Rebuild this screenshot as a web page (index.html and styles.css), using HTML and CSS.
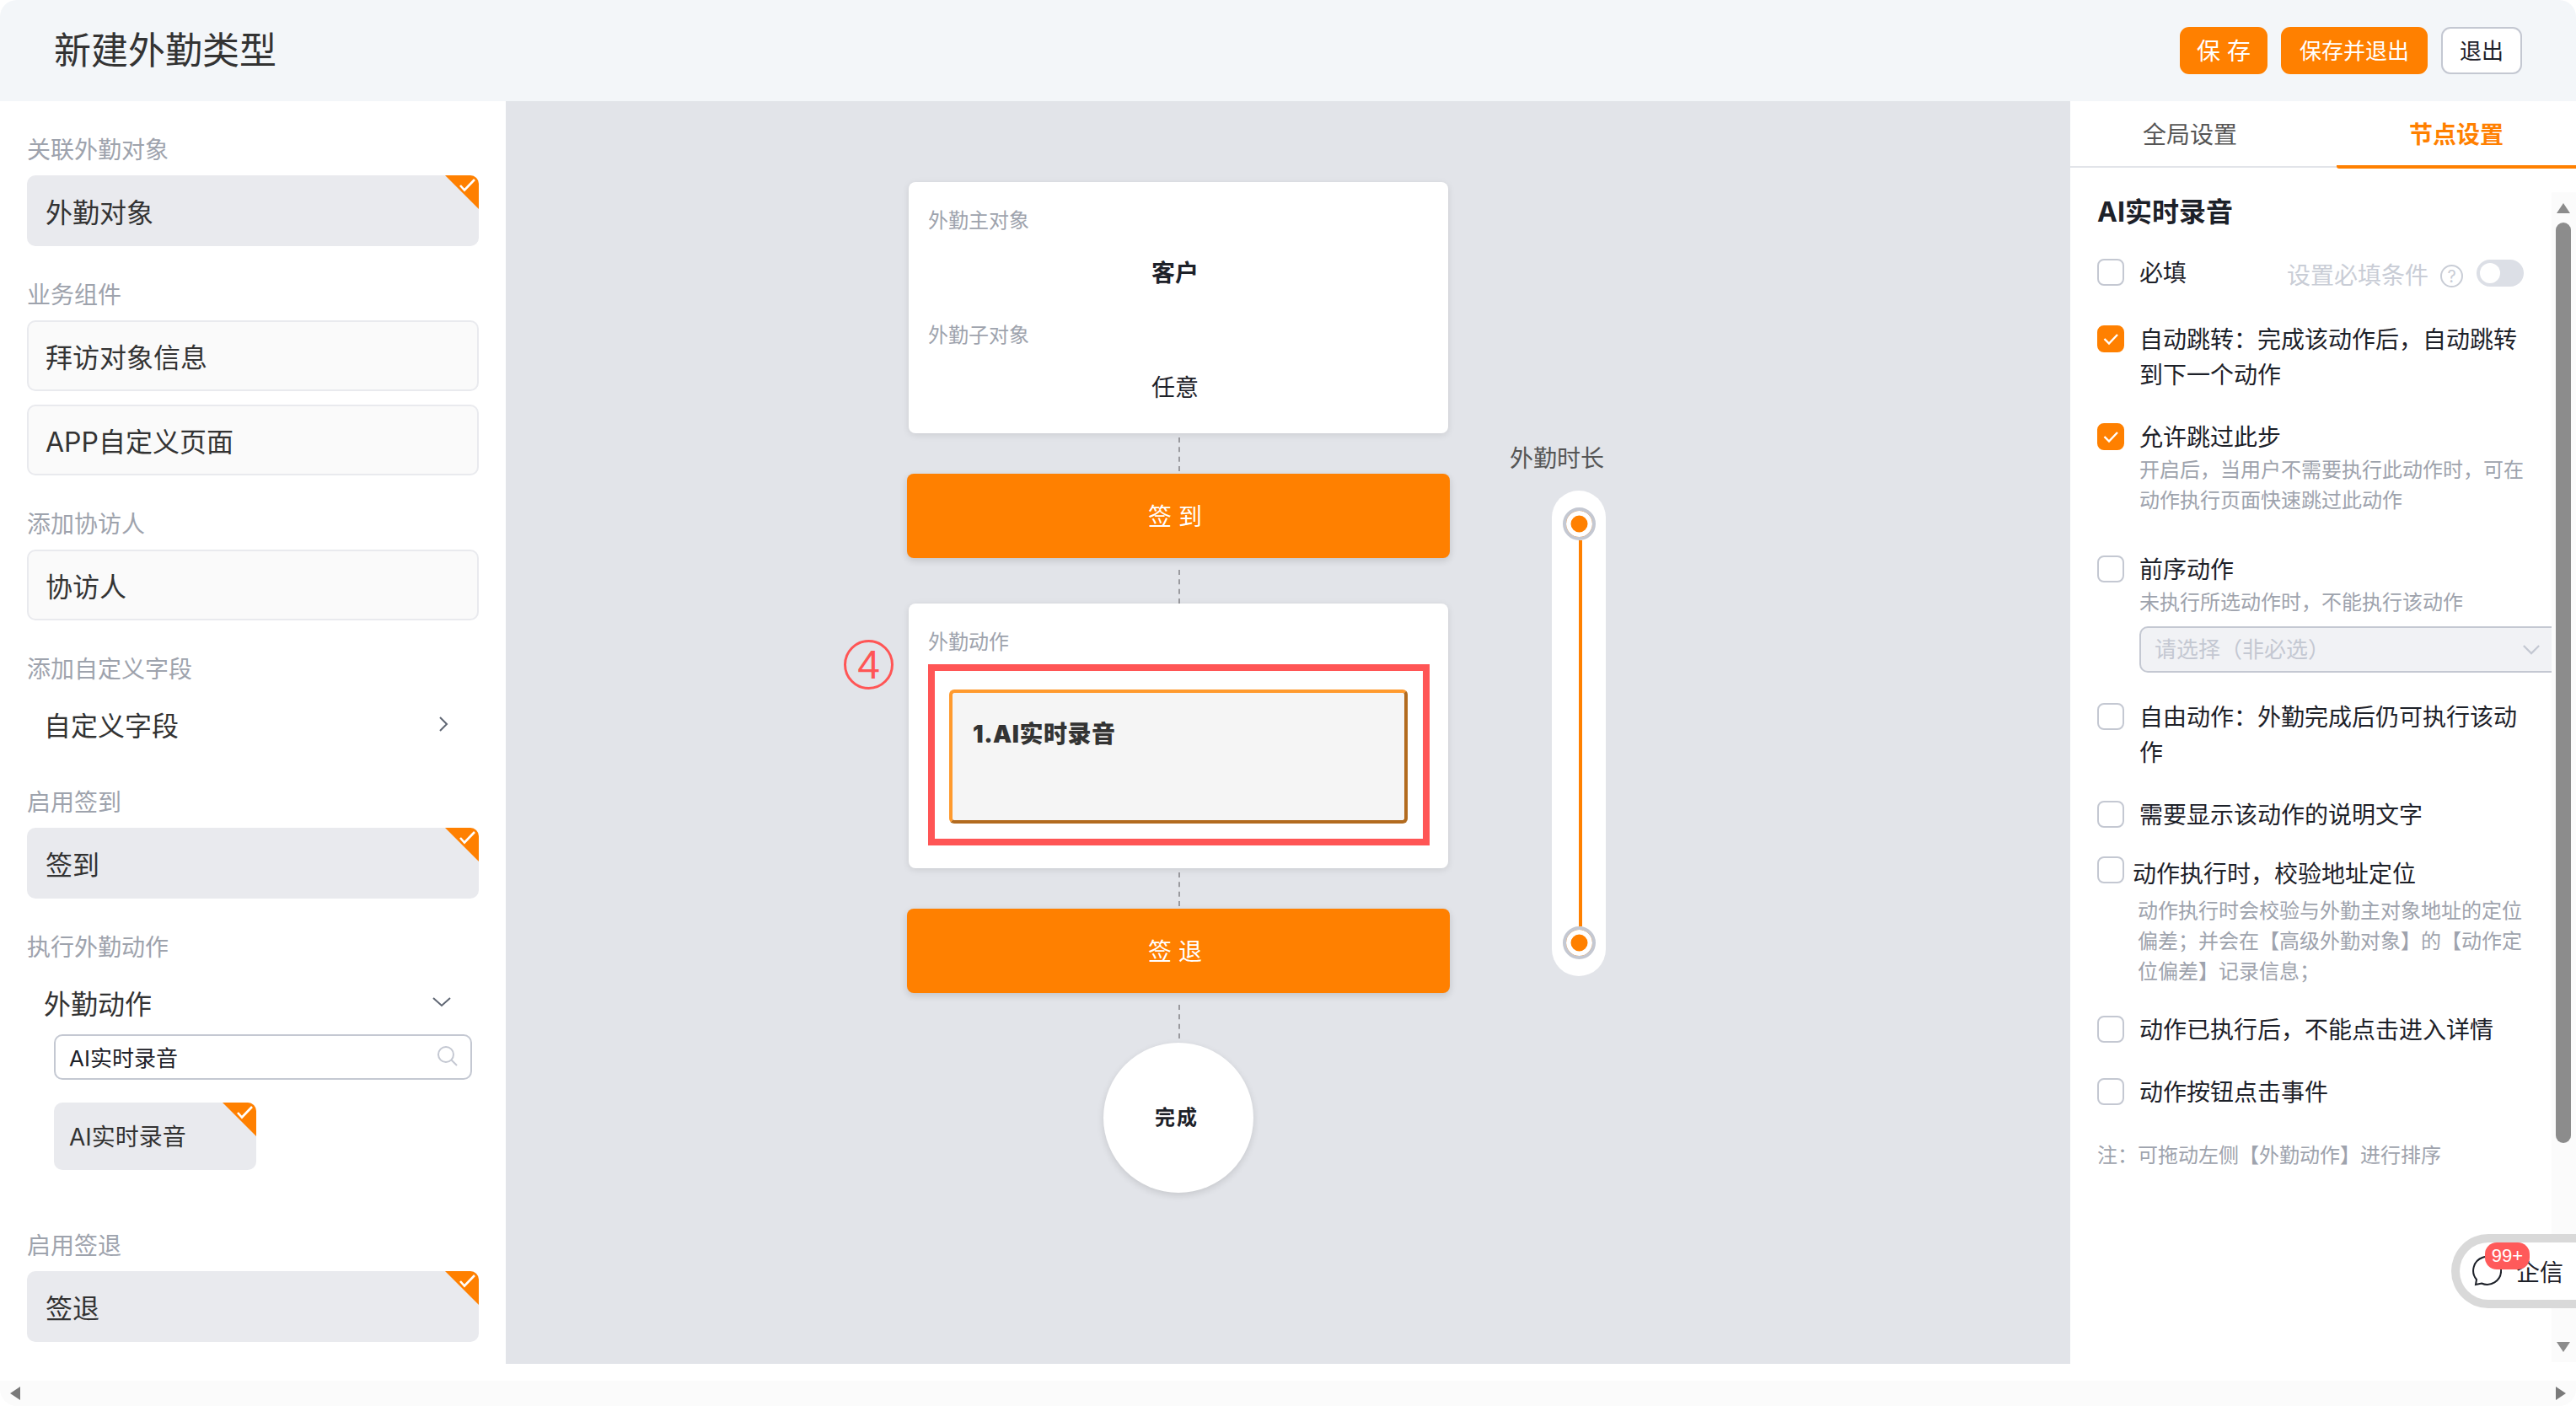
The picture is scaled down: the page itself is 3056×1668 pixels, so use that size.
FILE: index.html
```html
<!DOCTYPE html>
<html lang="zh-CN">
<head>
<meta charset="utf-8">
<title>新建外勤类型</title>
<link rel="stylesheet" href="styles.css">
</head>
<body>
<svg class="defs" width="0" height="0" aria-hidden="true">
  <symbol id="corner" viewBox="0 0 40 40">
    <polygon points="0,0 40,0 40,40" fill="#ff8000"/>
    <polyline points="18,12 23,17.5 35,5" fill="none" stroke="#fff" stroke-width="2.6"/>
  </symbol>
  <symbol id="tick" viewBox="0 0 32 32">
    <polyline points="8.5,16 14,21.5 24,11" fill="none" stroke="#fff" stroke-width="2.4"/>
  </symbol>
</svg>
<div class="app">
  <header class="topbar">
    <h1 class="title">新建外勤类型</h1>
    <div class="actions">
      <button class="btn btn-primary btn-save">保 存</button>
      <button class="btn btn-primary btn-save-exit">保存并退出</button>
      <button class="btn btn-plain btn-exit">退出</button>
    </div>
  </header>
  <main class="main">
    <aside class="sidebar">
      <section class="group">
        <div class="group-label">关联外勤对象</div>
        <div class="tile tile-on">外勤对象<svg class="corner"><use href="#corner"/></svg></div>
      </section>
      <section class="group">
        <div class="group-label">业务组件</div>
        <div class="tile">拜访对象信息</div>
        <div class="tile tile-next">APP自定义页面</div>
      </section>
      <section class="group">
        <div class="group-label">添加协访人</div>
        <div class="tile">协访人</div>
      </section>
      <section class="group">
        <div class="group-label">添加自定义字段</div>
        <div class="expander expander-custom">自定义字段
          <svg class="expander-icon" viewBox="0 0 24 24"><polyline points="8,4 16,12 8,20" fill="none" stroke="#5f6673" stroke-width="2"/></svg>
        </div>
      </section>
      <section class="group">
        <div class="group-label">启用签到</div>
        <div class="tile tile-on">签到<svg class="corner"><use href="#corner"/></svg></div>
      </section>
      <section class="group group-actions">
        <div class="group-label">执行外勤动作</div>
        <div class="expander">外勤动作
          <svg class="expander-icon" viewBox="0 0 24 24"><polyline points="2,7 12,16 22,7" fill="none" stroke="#5f6673" stroke-width="2"/></svg>
        </div>
        <div class="search">
          <span>AI实时录音</span>
          <svg class="search-icon" viewBox="0 0 26 26"><circle cx="11" cy="11" r="9" fill="none" stroke="#c4c8d2" stroke-width="2"/><line x1="17.5" y1="17.5" x2="24" y2="24" stroke="#c4c8d2" stroke-width="2"/></svg>
        </div>
        <div class="tile tile-on tile-small">AI实时录音<svg class="corner"><use href="#corner"/></svg></div>
      </section>
      <section class="group">
        <div class="group-label">启用签退</div>
        <div class="tile tile-on">签退<svg class="corner"><use href="#corner"/></svg></div>
      </section>
    </aside>

    <div class="canvas">
      <div class="flow">
        <div class="card card-objects">
          <div class="card-label">外勤主对象</div>
          <div class="card-value card-value-strong">客户</div>
          <div class="card-label card-label-next">外勤子对象</div>
          <div class="card-value">任意</div>
        </div>
        <div class="link link-48"></div>
        <div class="step">签 到</div>
        <div class="link link-54"></div>
        <div class="card card-actions">
          <div class="marker"><span>4</span></div>
          <div class="card-label">外勤动作</div>
          <div class="highlight">
            <div class="action-item">1.AI实时录音</div>
          </div>
        </div>
        <div class="link link-48"></div>
        <div class="step">签 退</div>
        <div class="link link-59"></div>
        <div class="finish">完成</div>
      </div>
      <div class="duration">
        <div class="duration-label">外勤时长</div>
        <div class="duration-track">
          <span class="handle"></span>
          <span class="duration-line"></span>
          <span class="handle"></span>
        </div>
      </div>
    </div>

    <aside class="panel">
      <div class="tabs">
        <div class="tab">全局设置</div>
        <div class="tab tab-active">节点设置</div>
      </div>
      <div class="panel-body">
        <div class="panel-content">
          <h2 class="panel-title">AI实时录音</h2>
          <div class="opt opt-required">
            <span class="check"></span>
            <div class="opt-text">必填</div>
            <div class="required-extra">
              <span class="required-text">设置必填条件</span>
              <span class="help">?</span>
              <span class="toggle"><span class="toggle-knob"></span></span>
            </div>
          </div>
          <div class="opt gap-37">
            <span class="check check-on"><svg class="tick"><use href="#tick"/></svg></span>
            <div class="opt-text">自动跳转：完成该动作后，自动跳转到下一个动作</div>
          </div>
          <div class="opt">
            <span class="check check-on"><svg class="tick"><use href="#tick"/></svg></span>
            <div class="opt-text">允许跳过此步
              <p class="hint">开启后，当用户不需要执行此动作时，可在动作执行页面快速跳过此动作</p>
            </div>
          </div>
          <div class="opt gap-43">
            <span class="check"></span>
            <div class="opt-text">前序动作
              <p class="hint">未执行所选动作时，不能执行该动作</p>
              <div class="select">
                <span>请选择（非必选）</span>
                <svg class="select-icon" viewBox="0 0 24 14"><polyline points="2,2 12,12 22,2" fill="none" stroke="#c4c8d2" stroke-width="2.4"/></svg>
              </div>
            </div>
          </div>
          <div class="opt">
            <span class="check"></span>
            <div class="opt-text">自由动作：外勤完成后仍可执行该动作</div>
          </div>
          <div class="opt">
            <span class="check"></span>
            <div class="opt-text">需要显示该动作的说明文字</div>
          </div>
          <div class="opt opt-tight">
            <span class="check"></span>
            <div class="opt-text">动作执行时，校验地址定位
              <p class="hint hint-offset">动作执行时会校验与外勤主对象地址的定位偏差；并会在【高级外勤对象】的【动作定位偏差】记录信息；</p>
            </div>
          </div>
          <div class="opt gap-30">
            <span class="check"></span>
            <div class="opt-text">动作已执行后，不能点击进入详情</div>
          </div>
          <div class="opt">
            <span class="check"></span>
            <div class="opt-text">动作按钮点击事件</div>
          </div>
          <p class="note">注：可拖动左侧【外勤动作】进行排序</p>
        </div>
        <div class="vscroll">
          <svg class="arrow-v" viewBox="0 0 16 12"><polygon points="8,0 16,12 0,12"/></svg>
          <div class="vthumb"></div>
          <svg class="arrow-v" viewBox="0 0 16 12"><polygon points="0,0 16,0 8,12"/></svg>
        </div>
      </div>
      <div class="chat">
        <svg class="chat-icon" viewBox="0 0 36 36"><path d="M5 34 L6 28 A16.5 16.5 0 1 1 12 32.5 Z" fill="none" stroke="#1d2129" stroke-width="2"/></svg>
        <span>企信</span>
        <span class="chat-badge">99+</span>
      </div>
    </aside>
  </main>
  <div class="hscroll">
    <svg class="arrow-h" viewBox="0 0 12 16"><polygon points="12,0 12,16 0,8"/></svg>
    <svg class="arrow-h" viewBox="0 0 12 16"><polygon points="0,0 12,8 0,16"/></svg>
  </div>
</div>
</body>
</html>
```
FILE: styles.css
```css
* { box-sizing: border-box; }
html, body {
  margin: 0;
  height: 100%;
  overflow: hidden;
  background: #fff;
}
body {
  font-family: "Inter", "Noto Sans CJK SC", "Liberation Sans", sans-serif;
  color: #333;
}
h1, h2, p { margin: 0; font-weight: inherit; }
.defs { position: absolute; }

.app { width: 3056px; height: 1668px; display: flex; flex-direction: column; }

/* top bar */
.topbar {
  height: 120px;
  flex: none;
  display: flex;
  align-items: center;
  justify-content: space-between;
  padding: 0 64px;
  background: #f3f6f9;
  border-radius: 20px 20px 0 0;
}
.title { font-size: 44px; line-height: 60px; font-weight: 400; color: #333; }
.actions { display: flex; gap: 16px; }
.btn {
  height: 56px;
  padding: 2px 0 0;
  border-radius: 11px;
  font: inherit;
  font-size: 26px;
  line-height: 50px;
  border: 2px solid transparent;
}
.btn-save { width: 104px; font-size: 28px; }
.btn-save-exit { width: 174px; }
.btn-exit { width: 96px; }
.btn-primary { background: #ff8000; color: #fff; }
.btn-plain { background: #fff; color: #1d2129; border-color: #c4c8d2; }

.main { flex: none; height: 1498px; display: flex; }

/* left column */
.sidebar { flex: none; width: 600px; padding: 38px 32px 0; background: #fff; overflow: hidden; }
.group { margin-bottom: 38px; }
.group-actions { margin-bottom: 70px; }
.group-label { font-size: 28px; line-height: 40px; color: #9ea3ad; margin-bottom: 10px; }
.tile {
  position: relative;
  height: 84px;
  padding-left: 20px;
  display: flex;
  align-items: center;
  font-size: 32px;
  color: #333;
  background: #fafafa;
  border: 2px solid #e9eaee;
  border-radius: 10px;
  overflow: hidden;
}
.tile-next { margin-top: 16px; }
.tile-on { background: #e9eaee; border: 0; padding-left: 22px; }
.corner { position: absolute; top: 0; right: 0; width: 40px; height: 40px; }
.tile-small { width: 240px; height: 80px; margin: 27px 0 0 32px; padding: 0 0 2px 18px; font-size: 28px; }
.expander {
  height: 70px;
  padding: 0 32px 0 20px;
  display: flex;
  align-items: center;
  justify-content: space-between;
  font-size: 32px;
  color: #333;
}
.expander-custom { padding-right: 30px; }
.expander-icon { width: 24px; height: 24px; }
.search {
  height: 54px;
  width: 496px;
  margin: 3px 0 0 32px;
  padding: 0 14px 2px 16px;
  display: flex;
  align-items: center;
  justify-content: space-between;
  font-size: 26px;
  color: #1d2129;
  background: #fff;
  border: 2px solid #c4c8d2;
  border-radius: 10px;
}
.search-icon { width: 26px; height: 26px; }

/* canvas */
.canvas { flex: 1; display: flex; background: #e2e4e9; min-width: 0; }
.flow { width: 644px; margin-left: 476px; padding-top: 96px; display: flex; flex-direction: column; align-items: center; }
.card {
  position: relative;
  width: 640px;
  background: #fff;
  border-radius: 8px;
  box-shadow: 0 2px 8px rgba(0, 0, 0, .1);
}
.card-objects { padding: 28px 23px 34px; }
.card-actions { padding: 28px 22px 27px 23px; }
.card-label { font-size: 24px; line-height: 36px; color: #9ea3ad; }
.card-label-next { margin-top: 36px; }
.card-value { margin-top: 24px; padding-right: 8px; font-size: 28px; line-height: 40px; text-align: center; color: #1d2129; }
.card-value-strong { font-weight: 700; }
.link { width: 0; margin-left: 2px; border-left: 2px dashed #9a9a9f; background-clip: padding-box; }
.link-48 { height: 40px; margin-top: 5px; margin-bottom: 3px; }
.link-54 { height: 40px; margin-top: 14px; }
.link-59 { height: 40px; margin-top: 14px; margin-bottom: 5px; }
.step {
  width: 644px;
  height: 100px;
  padding: 0 8px 2px 0;
  display: flex;
  align-items: center;
  justify-content: center;
  font-size: 28px;
  color: #fff;
  background: #ff8000;
  border-radius: 8px;
  box-shadow: 0 3px 8px rgba(0, 0, 0, .14);
}
.marker {
  position: absolute;
  left: -77px;
  top: 43px;
  width: 59px;
  height: 59px;
  display: flex;
  align-items: center;
  justify-content: center;
  border: 3px solid #ff5555;
  border-radius: 50%;
  font-family: "Liberation Sans", sans-serif;
  font-size: 48px;
  color: #ff5555;
}
.highlight { margin-top: 8px; padding: 22px 18px 18px 17px; background: #fff; border: 8px solid #ff5555; }
.action-item {
  height: 159px;
  padding: 29px 24px 0;
  font-size: 28px;
  line-height: 40px;
  font-weight: 900;
  letter-spacing: .5px;
  color: #333;
  background: #f5f5f5;
  border: 4px solid;
  border-color: #ff9a2e #b26b1f #b26b1f #ff9a2e;
  border-radius: 6px;
}
.finish {
  width: 178px;
  height: 178px;
  padding: 0 4px 6px 0;
  display: flex;
  align-items: center;
  justify-content: center;
  font-size: 24px;
  font-weight: 700;
  letter-spacing: 2px;
  color: #1d2129;
  background: #fff;
  border-radius: 50%;
  box-shadow: 0 3px 8px rgba(0, 0, 0, .12);
}
.duration { margin-left: 71px; padding-top: 404px; width: 114px; }
.duration-label { font-size: 28px; line-height: 40px; color: #555; }
.duration-track {
  width: 64px;
  height: 576px;
  margin: 18px 0 0 50px;
  padding: 20px 0;
  display: flex;
  flex-direction: column;
  align-items: center;
  background: #fff;
  border-radius: 32px;
}
.handle {
  flex: none;
  width: 39px;
  height: 39px;
  background: #ff8000;
  border: 4px solid #c4c8d2;
  border-radius: 50%;
  box-shadow: inset 0 0 0 5.5px #fff;
}
.duration-line { flex: 1; width: 4px; margin-left: 4px; background: #ff8000; }

/* right column */
.panel { position: relative; flex: none; width: 600px; display: flex; flex-direction: column; background: #fff; }
.tabs { flex: none; height: 79px; display: flex; gap: 32px; border-bottom: 2px solid #e2e4e9; }
.tab { width: 284px; height: 80px; font-size: 28px; line-height: 80px; text-align: center; color: #555; }
.tab-active { color: #ff8000; font-weight: 700; border-bottom: 4px solid #ff8000; border-radius: 0 0 0 3px; }
.panel-body { flex: 1; min-height: 0; margin: 29px 0 2px; display: flex; }
.panel-content { flex: 1; min-width: 0; padding-left: 32px; overflow: hidden; }
.panel-title { font-size: 32px; line-height: 48px; font-weight: 700; color: #1d2129; }
.opt { display: flex; gap: 18px; margin-top: 32px; font-size: 28px; line-height: 42px; color: #1d2129; }
.opt-required { margin-top: 27px; }
.gap-30 { margin-top: 30px; }
.gap-37 { margin-top: 37px; }
.gap-43 { margin-top: 43px; }
.opt-tight { margin-top: 28px; gap: 10px; }
.opt-text { width: 460px; flex: none; }
.opt-required .opt-text { width: auto; }
.opt-tight .opt-text { width: 476px; }
.check {
  flex: none;
  width: 32px;
  height: 32px;
  margin-top: 4px;
  background: #fff;
  border: 2px solid #c4c8d2;
  border-radius: 8px;
}
.opt-tight .check { margin-top: 0; }
.check-on { background: #ff8000; border-color: #ff8000; position: relative; }
.tick { position: absolute; left: -2px; top: -2px; width: 32px; height: 32px; }
.required-extra { height: 42px; display: flex; align-items: flex-start; margin-left: 101px; color: #c9cdd6; }
.required-text { margin-top: 3px; }
.help {
  width: 27px;
  height: 27px;
  margin: 11px 0 0 14px;
  display: flex;
  align-items: center;
  justify-content: center;
  font-size: 20px;
  line-height: 1;
  border: 2px solid #c9cdd6;
  border-radius: 50%;
}
.toggle { width: 56px; height: 32px; margin: 5px 0 0 16px; padding: 4px; background: #dcdfe6; border-radius: 16px; }
.toggle-knob { display: block; width: 24px; height: 24px; background: #fff; border-radius: 50%; }
.hint { font-size: 24px; line-height: 36px; color: #9ea3ad; }
.hint-offset { margin: 5px 0 0 6px; width: 462px; }
.select {
  width: 500px;
  height: 55px;
  margin-top: 10px;
  padding: 0 22px 0 16px;
  display: flex;
  align-items: center;
  justify-content: space-between;
  font-size: 26px;
  color: #c4c8d2;
  background: #f1f2f5;
  border: 2px solid #c4c8d2;
  border-radius: 10px;
}
.select-icon { width: 22px; height: 13px; }
.note { margin-top: 36px; font-size: 24px; line-height: 36px; color: #9ea3ad; }
.vscroll { flex: none; width: 29px; padding: 13px 6px 12px 5px; display: flex; flex-direction: column; align-items: center; background: #fbfbfb; }
.arrow-v { flex: none; width: 16px; height: 12px; fill: #8c8c8c; }
.vthumb { flex: none; width: 18px; height: 1092px; margin-top: 11px; margin-bottom: auto; background: #8c8c8c; border-radius: 9px; }

.chat {
  position: absolute;
  left: 452px;
  right: 0;
  top: 1344px;
  height: 88px;
  padding-left: 14px;
  display: flex;
  align-items: center;
  gap: 17px;
  font-size: 28px;
  color: #1d2129;
  background: #fff;
  border: 10px solid #d9d9d9;
  border-right: 0;
  border-radius: 44px 0 0 44px;
}
.chat-icon { flex: none; width: 36px; height: 36px; }
.chat-badge {
  position: absolute;
  left: 30px;
  top: 0;
  width: 53px;
  height: 32px;
  font-family: "Liberation Sans", sans-serif;
  font-size: 22px;
  line-height: 32px;
  text-align: center;
  color: #fff;
  background: #ff5a5a;
  border-radius: 14px;
}

/* bottom scrollbar */
.hscroll {
  flex: none;
  height: 30px;
  margin-top: 20px;
  padding: 0 12px;
  display: flex;
  align-items: center;
  justify-content: space-between;
  background: #fbfbfb;
  border-radius: 0 0 20px 20px;
}
.arrow-h { width: 12px; height: 16px; fill: #7a7a7a; }
```
